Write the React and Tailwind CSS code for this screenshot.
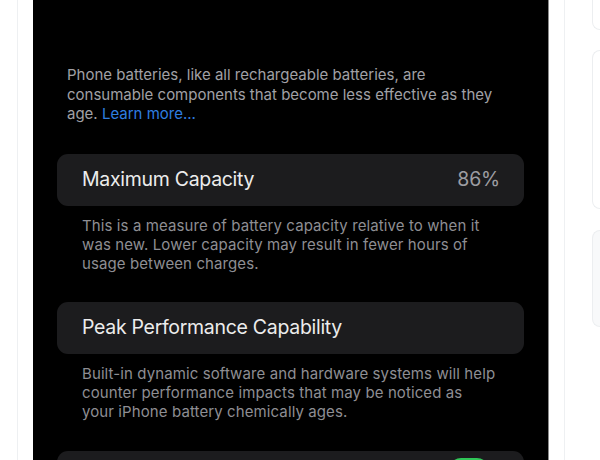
export default function App() {
  const font = { fontFamily: 'Inter, "Noto Sans", sans-serif' };
  return (
    <div className="w-[600px] h-[460px] overflow-hidden bg-white flex" style={font}>
      <div className="w-[17px] shrink-0" />
      <div className="w-px shrink-0 bg-[#eef0f2]" />
      <div className="w-[15px] shrink-0" />
      <div className="w-[516px] shrink-0 bg-black pt-[65px] border-r border-[#8a8a8a] antialiased">
        <p className="px-[34px] text-[15px] leading-[19.5px] text-[#a1a1a6]">
          Phone batteries, like all rechargeable batteries, are consumable components that become less effective as they age.{' '}
          <span className="text-[#2f7ee0]">Learn more...</span>
        </p>
        <div className="mx-[24px] mt-[30px] h-[52px] rounded-[11px] bg-[#1c1c1e] flex items-center justify-between pl-[25px] pr-[24px]">
          <span className="text-[19.5px] text-[#ececec] tracking-[-0.3px]">Maximum Capacity</span>
          <span className="text-[19.5px] text-[#9d9da2] tracking-[-0.2px]">86%</span>
        </div>
        <p className="mx-[24px] px-[25px] mt-[10px] text-[15px] leading-[19px] text-[#8e8e93] tracking-[0.1px]">
          This is a measure of battery capacity relative to when it was new. Lower capacity may result in fewer hours of usage between charges.
        </p>
        <div className="mx-[24px] mt-[29px] h-[52px] rounded-[11px] bg-[#1c1c1e] flex items-center px-[25px]">
          <span className="text-[19.5px] text-[#ececec] tracking-[-0.3px]">Peak Performance Capability</span>
        </div>
        <p className="mx-[24px] px-[25px] mt-[10px] text-[15px] leading-[19px] text-[#8e8e93] tracking-[0.1px]">
          Built-in dynamic software and hardware systems will help counter performance impacts that may be noticed as
          <br />
          your iPhone battery chemically ages.
        </p>
        <div className="mx-[24px] mt-[30px] h-[52px] rounded-[11px] bg-[#1c1c1e] flex items-start justify-end pr-[35px] pt-[7px]">
          <div className="w-[40px] h-[24px] rounded-full bg-[#30c758]" />
        </div>
      </div>
      <div className="w-[15px] shrink-0" />
      <div className="w-px shrink-0 bg-[#eef0f2]" />
      <div className="flex-1 flex flex-col pl-[27px]">
        <div className="h-[50px] mt-[-20px] rounded-l-[12px] border border-r-0 border-[#eceef0]" />
        <div className="h-[159px] mt-[20px] rounded-l-[12px] border border-r-0 border-[#eceef0]" />
        <div className="h-[97px] mt-[21px] rounded-l-[12px] border border-r-0 border-[#eceef0] bg-[#f8f9fa]" />
      </div>
    </div>
  );
}
